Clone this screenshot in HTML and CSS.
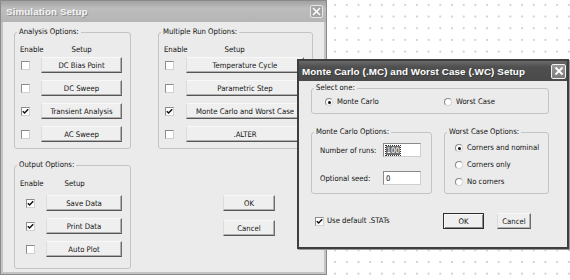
FILE: index.html
```html
<!DOCTYPE html>
<html lang="en">
<head>
    <meta charset="UTF-8">
    <title>Simulation Setup</title>
    <link rel="stylesheet" href="styles.css">
</head>
<body>
    <div class="desktop">

        <!-- Main dialog -->
        <div class="window sim">
            <div class="titlebar">
                <span class="title">Simulation Setup</span>
                <span class="close">
                    <svg width="9" height="9" viewBox="0 0 9 9"><path d="M1 1 L8 8 M8 1 L1 8" stroke="#fff" stroke-width="1.6"/></svg>
                </span>
            </div>
            <div class="body sim-body">
                <div class="top-row">
                    <fieldset class="group analysis">
                        <legend>Analysis Options:</legend>
                        <div class="head"><span>Enable</span><span class="setup">Setup</span></div>
                        <div class="rows">
                            <div class="row"><span class="check"></span><button class="btn">DC Bias Point</button></div>
                            <div class="row"><span class="check"></span><button class="btn">DC Sweep</button></div>
                            <div class="row"><span class="check"><svg width="7" height="7" viewBox="0 0 7 7"><path d="M0.8 3.2 L2.6 5 L6.2 1.2" stroke="#111" stroke-width="1.5" fill="none"/></svg></span><button class="btn">Transient Analysis</button></div>
                            <div class="row"><span class="check"></span><button class="btn">AC Sweep</button></div>
                        </div>
                    </fieldset>

                    <fieldset class="group multi">
                        <legend>Multiple Run Options:</legend>
                        <div class="head"><span>Enable</span><span class="setup">Setup</span></div>
                        <div class="rows">
                            <div class="row"><span class="check"></span><button class="btn">Temperature Cycle</button></div>
                            <div class="row"><span class="check"></span><button class="btn">Parametric Step</button></div>
                            <div class="row"><span class="check"><svg width="7" height="7" viewBox="0 0 7 7"><path d="M0.8 3.2 L2.6 5 L6.2 1.2" stroke="#111" stroke-width="1.5" fill="none"/></svg></span><button class="btn">Monte Carlo and Worst Case</button></div>
                            <div class="row"><span class="check"></span><button class="btn">.ALTER</button></div>
                        </div>
                    </fieldset>
                </div>

                <div class="bottom-row">
                    <fieldset class="group output">
                        <legend>Output Options:</legend>
                        <div class="head"><span>Enable</span><span class="setup">Setup</span></div>
                        <div class="rows">
                            <div class="row"><span class="check"><svg width="7" height="7" viewBox="0 0 7 7"><path d="M0.8 3.2 L2.6 5 L6.2 1.2" stroke="#111" stroke-width="1.5" fill="none"/></svg></span><button class="btn">Save Data</button></div>
                            <div class="row"><span class="check"><svg width="7" height="7" viewBox="0 0 7 7"><path d="M0.8 3.2 L2.6 5 L6.2 1.2" stroke="#111" stroke-width="1.5" fill="none"/></svg></span><button class="btn">Print Data</button></div>
                            <div class="row"><span class="check"></span><button class="btn">Auto Plot</button></div>
                        </div>
                    </fieldset>

                    <div class="actions">
                        <button class="btn">OK</button>
                        <button class="btn">Cancel</button>
                    </div>
                </div>
            </div>
        </div>

        <!-- Monte Carlo / Worst Case dialog -->
        <div class="window mc">
            <div class="titlebar">
                <span class="title">Monte Carlo (.MC) and Worst Case (.WC) Setup</span>
                <span class="close">
                    <svg width="10" height="10" viewBox="0 0 10 10"><path d="M1.5 1.5 L8.5 8.5 M8.5 1.5 L1.5 8.5" stroke="#fff" stroke-width="1.8"/></svg>
                </span>
            </div>
            <div class="body mc-body">
                <fieldset class="group select">
                    <legend>Select one:</legend>
                    <div class="radio-line">
                        <label class="opt"><span class="radio on"></span>Monte Carlo</label>
                        <label class="opt"><span class="radio"></span>Worst Case</label>
                    </div>
                </fieldset>

                <div class="mc-row">
                    <fieldset class="group mc-opts">
                        <legend>Monte Carlo Options:</legend>
                        <div class="stack fields">
                            <div class="field"><span class="lbl">Number of runs:</span><span class="input"><span class="sel">100</span></span></div>
                            <div class="field"><span class="lbl">Optional seed:</span><span class="input">0</span></div>
                        </div>
                    </fieldset>

                    <fieldset class="group wc-opts">
                        <legend>Worst Case Options:</legend>
                        <div class="stack corners">
                            <label class="opt"><span class="radio on"></span>Corners and nominal</label>
                            <label class="opt"><span class="radio"></span>Corners only</label>
                            <label class="opt"><span class="radio"></span>No corners</label>
                        </div>
                    </fieldset>
                </div>

                <div class="mc-foot">
                    <label class="opt stats"><span class="check"><svg width="7" height="7" viewBox="0 0 7 7"><path d="M0.8 3.2 L2.6 5 L6.2 1.2" stroke="#111" stroke-width="1.5" fill="none"/></svg></span>Use default .STATs</label>
                    <button class="btn default">OK</button>
                    <button class="btn cancel">Cancel</button>
                </div>
            </div>
        </div>

    </div>
</body>
</html>
```

FILE: styles.css
```css
html, body {
    margin: 0;
    padding: 0;
}
body {
    font-family: "DejaVu Sans Condensed", "Liberation Sans", Arial, sans-serif;
    font-size: 7.7px;
    color: #111;
    background-color: #fff;
}
.desktop {
    position: relative;
    width: 570px;
    height: 280px;
    overflow: hidden;
    background-color: #fff;
    background-image: radial-gradient(circle, #d2d2d2 0.8px, transparent 1.2px);
    background-size: 11.7px 11.7px;
    background-position: 2px -1px;
}

/* windows */
.window {
    position: absolute;
    box-sizing: border-box;
    background-color: #ebebeb;
}
.sim {
    left: 0;
    top: 0;
    width: 327px;
    height: 275px;
    border: 1px solid #8a8a8a;
    box-shadow: inset 0 0 0 2px #c4c4c4;
}
.mc {
    left: 297px;
    top: 59px;
    width: 272px;
    height: 190px;
    border: 2px solid #3e3e3e;
    box-shadow: 1px 1px 0 #9a9a9a;
}
.titlebar {
    display: flex;
    align-items: center;
    justify-content: space-between;
    height: 21px;
    padding: 0 3px 0 5px;
}
.sim .titlebar {
    background: linear-gradient(#a2a2a2, #bdbdbd 35%, #b5b5b5);
}
.mc .titlebar {
    height: 20px;
    padding: 0 1px 0 3px;
    background: linear-gradient(#6a6a6a, #4f4f4f 30%, #4a4a4a);
}
.title {
    font-family: "Liberation Sans", Arial, sans-serif;
    font-weight: bold;
    font-size: 9.8px;
    letter-spacing: 0.1px;
    color: #f4f4f4;
    text-shadow: 1px 1px 0 rgba(0,0,0,0.25);
}
.mc .title {
    color: #fff;
}
.close {
    display: flex;
    align-items: center;
    justify-content: center;
    box-sizing: border-box;
    border-radius: 2px;
}
.sim .close {
    width: 13px;
    height: 13px;
    border: 1px solid #e6e6e6;
    background: #a4a4a4;
}
.mc .close {
    width: 15px;
    height: 15px;
    border: 1px solid #f0f0f0;
    background: linear-gradient(#9a9a9a, #7c7c7c);
}

/* group boxes */
.group {
    --pad: 0px;
    margin: 0;
    padding: 0 0 0 var(--pad);
    border: 1px solid #c4c4c4;
    border-radius: 3px;
    min-width: 0;
    box-sizing: border-box;
}
.group legend {
    padding: 0 2px;
    margin-left: calc(2px - var(--pad));
    line-height: 10px;
}
.head {
    display: flex;
    line-height: 10px;
}

/* buttons */
.btn {
    font-family: inherit;
    font-size: inherit;
    color: #111;
    margin: 0;
    padding: 0;
    height: 16px;
    box-sizing: border-box;
    background-color: #efefef;
    border: 1px solid;
    border-color: #f8f8f8 #6e6e6e #555 #dcdcdc;
    box-shadow: inset -1px -1px 0 #b0b0b0;
}

/* checkbox and radio */
.check {
    display: inline-flex;
    align-items: center;
    justify-content: center;
    box-sizing: border-box;
    width: 9px;
    height: 9px;
    background: #fff;
    border: 1px solid #8c8c8c;
    border-right-color: #d0d0d0;
    border-bottom-color: #d0d0d0;
}
.radio {
    display: inline-flex;
    align-items: center;
    justify-content: center;
    box-sizing: border-box;
    width: 8px;
    height: 8px;
    border-radius: 50%;
    background: #fff;
    border: 1px solid #8a8a8a;
    border-right-color: #d4d4d4;
    border-bottom-color: #d4d4d4;
    margin-right: 4px;
}
.radio.on::after {
    content: "";
    width: 3px;
    height: 3px;
    border-radius: 50%;
    background: #111;
}
.opt {
    display: flex;
    align-items: center;
    line-height: 10px;
}

/* main dialog body */
.sim-body {
    padding: 5px 0 0 13px;
}
.top-row {
    display: flex;
    gap: 27px;
}
.top-row .group {
    --pad: 5px;
    height: 122px;
    padding-top: 8px;
}
.analysis {
    width: 117px;
}
.multi {
    width: 155px;
}
.rows {
    display: flex;
    flex-direction: column;
    gap: 7px;
    margin-top: 2px;
}
.row {
    display: flex;
    align-items: center;
}
.analysis .head .setup {
    margin-left: 28px;
}
.analysis .row .check {
    margin: 0 11px 0 1px;
}
.analysis .btn {
    width: 81px;
}
.multi .head .setup {
    margin-left: 37px;
}
.multi .row .check {
    margin: 0 12px 0 1px;
}
.multi .btn {
    width: 118px;
}

.bottom-row {
    display: flex;
    margin-top: 11px;
}
.output {
    --pad: 5px;
    width: 117px;
    height: 109px;
    padding-top: 9px;
}
.output .head .setup {
    margin-left: 21px;
}
.output .rows {
    margin-top: 6px;
}
.output .row .check {
    margin: 0 11px 0 6px;
}
.output .btn {
    width: 76px;
}
.actions {
    display: flex;
    flex-direction: column;
    gap: 9px;
    margin: 35px 0 0 92px;
}
.actions .btn {
    width: 52px;
}

/* Monte Carlo dialog body */
.mc-body {
    padding: 2px 18px 0 12px;
}
.select {
    --pad: 13px;
    height: 31px;
    padding-top: 4px;
}
.radio-line {
    display: flex;
}
.radio-line .opt:first-child {
    width: 119px;
}
.mc-row {
    display: flex;
    gap: 12px;
    margin-top: 13px;
}
.mc-opts {
    --pad: 8px;
    width: 121px;
    height: 67px;
    padding-top: 6px;
}
.wc-opts {
    --pad: 10px;
    width: 105px;
    height: 67px;
    padding-top: 6px;
}
.stack {
    display: flex;
    flex-direction: column;
}
.fields {
    gap: 14px;
}
.corners {
    gap: 7px;
}
.field {
    display: flex;
    align-items: center;
}
.lbl {
    width: 63px;
}
.input {
    box-sizing: border-box;
    width: 38px;
    height: 14px;
    padding: 0 2px;
    display: flex;
    align-items: center;
    background: #fff;
    border: 1px solid #8a8a8a;
    border-right-color: #cfcfcf;
    border-bottom-color: #cfcfcf;
}
.sel {
    background: #707070;
    color: #fff;
    outline: 1px dotted #333;
    line-height: 9px;
    padding: 0 0.5px;
}
.mc-foot {
    display: flex;
    align-items: center;
    margin-top: 19px;
}
.stats {
    width: 128px;
    padding-left: 4px;
}
.stats .check {
    margin-right: 3px;
}
.mc-foot .default {
    width: 41px;
    border: 1px solid #2c2c2c;
    box-shadow: inset 1px 1px 0 #fafafa, inset -1px -1px 0 #8a8a8a;
}
.mc-foot .cancel {
    width: 34px;
    margin-left: 13px;
}
```
